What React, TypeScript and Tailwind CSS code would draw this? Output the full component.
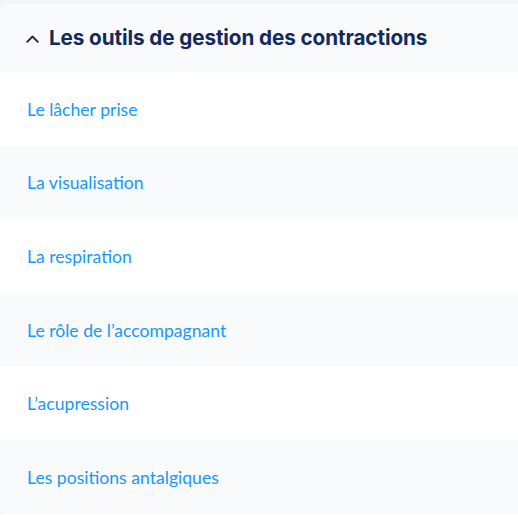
import React from "react";

const items = [
  "Le lâcher prise",
  "La visualisation",
  "La respiration",
  "Le rôle de l’accompagnant",
  "L’acupression",
  "Les positions antalgiques",
];

export default function App() {
  return (
    <div className="w-[518px] h-[518px] bg-white overflow-hidden">
      <div className="bg-[#f1f4f8] pt-[4px]">
        <div className="rounded-tl-[8px] rounded-bl-[8px] overflow-hidden bg-white">
          <div className="h-[68px] bg-[#f8fafc] flex items-center pl-[26px] gap-[10px]">
            <svg width="13" height="8" viewBox="0 0 13 8" className="mt-[1px]">
              <path d="M1.2 6.8 L6.5 1.5 L11.8 6.8" fill="none" stroke="#142a5c" strokeWidth="1.9" strokeLinecap="round" strokeLinejoin="round" />
            </svg>
            <span className="text-[20.7px] font-bold text-[#142a5c] tracking-[-0.1px]" style={{ fontFamily: "Inter, 'Liberation Sans', sans-serif" }}>
              Les outils de gestion des contractions
            </span>
          </div>
          {items.map((t, i) => (
            <div
              key={t}
              className={
                "h-[73.67px] flex items-center pl-[27px] pt-[2px] " +
                (i % 2 === 0 ? "bg-white" : "bg-[#f8fafc]")
              }
            >
              <span className="text-[17.6px] text-[#1699f7]" style={{ fontFamily: "Lato, 'Noto Sans', sans-serif" }}>
                {t}
              </span>
            </div>
          ))}
        </div>
      </div>
    </div>
  );
}
